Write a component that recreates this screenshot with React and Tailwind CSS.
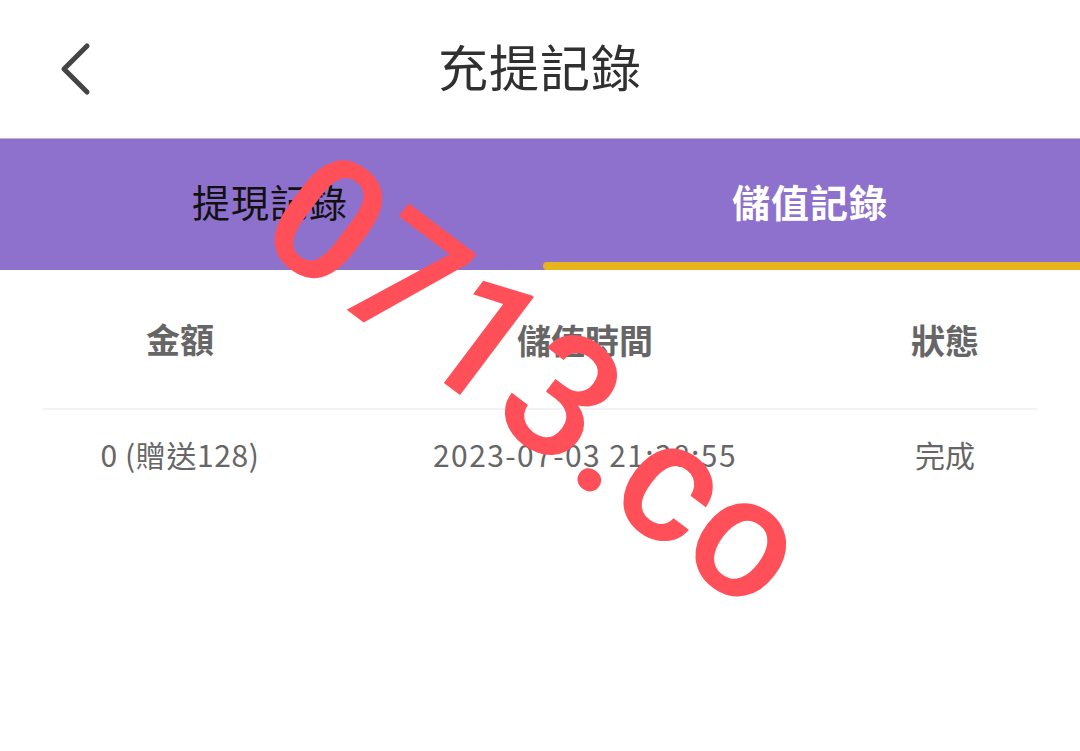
import React, { useState } from "react";

const records = [
  { amount: "0 (贈送128)", time: "2023-07-03 21:38:55", status: "完成" },
];

const App = () => {
  const [tab, setTab] = useState("deposit");

  return (
    <div
      className="relative w-[1080px] h-[751px] bg-white overflow-hidden"
      style={{ fontFamily: '"Noto Sans CJK TC", "Noto Sans", Roboto, sans-serif' }}
    >
      {/* Header */}
      <div className="relative h-[139px] flex items-center justify-center border-b border-[#bdb6c9]">
        <button className="absolute left-[52px] top-[36px] w-[48px] h-[64px] flex items-center justify-center">
          <svg width="36" height="56" viewBox="0 0 36 56">
            <polyline
              points="29,6 6,29 29,52"
              fill="none"
              stroke="#454545"
              strokeWidth="5"
              strokeLinecap="round"
              strokeLinejoin="round"
            />
          </svg>
        </button>
        <h1 className="text-[50px] leading-none text-[#303030] tracking-[1px] -mt-[8px]">充提記錄</h1>
      </div>

      {/* Tabs */}
      <div className="flex h-[131px] bg-[#8e71cd]">
        <button
          onClick={() => setTab("withdraw")}
          className="relative flex-1 flex items-center justify-center"
        >
          <span
            className={`text-[38px] leading-none tracking-[1px] -mt-[8px] ${
              tab === "withdraw" ? "text-white font-semibold" : "text-[#111111]"
            }`}
          >
            提現記錄
          </span>
          {tab === "withdraw" && (
            <div className="absolute left-[3px] right-0 bottom-0 h-[8px] bg-[#e8b41e] rounded-l-[4px]"></div>
          )}
        </button>
        <button
          onClick={() => setTab("deposit")}
          className="relative flex-1 flex items-center justify-center"
        >
          <span
            className={`text-[38px] leading-none tracking-[1px] -mt-[8px] ${
              tab === "deposit" ? "text-white font-semibold" : "text-[#111111]"
            }`}
          >
            儲值記錄
          </span>
          {tab === "deposit" && (
            <div className="absolute left-[3px] right-0 bottom-0 h-[8px] bg-[#e8b41e] rounded-l-[4px]"></div>
          )}
        </button>
      </div>

      {/* Table */}
      <div className="px-[43px]">
        <div className="grid grid-cols-[274px_536px_184px] h-[140px] items-center border-b-2 border-[#f3f3f3] text-[#666666] text-[34px] font-bold">
          <div className="text-center -mt-[1px]">金額</div>
          <div className="text-center">儲值時間</div>
          <div className="text-center">狀態</div>
        </div>
        {records.map((r, i) => (
          <div
            key={i}
            className="grid grid-cols-[274px_536px_184px] h-[88px] items-center text-[#666666] text-[30px]"
          >
            <div className="text-center tracking-[0.6px]">{r.amount}</div>
            <div className="text-center tracking-[1.4px]">{r.time}</div>
            <div className="text-center">{r.status}</div>
          </div>
        ))}
      </div>

      {/* Watermark */}
      <div
        className="absolute left-[538px] top-[380px] -translate-x-1/2 -translate-y-1/2 rotate-[37deg] text-[#ff4f59] text-[172px] font-medium leading-none whitespace-nowrap pointer-events-none"
        style={{ fontFamily: "Roboto, sans-serif" }}
      >
        0713.co
      </div>
    </div>
  );
};

export default App;
